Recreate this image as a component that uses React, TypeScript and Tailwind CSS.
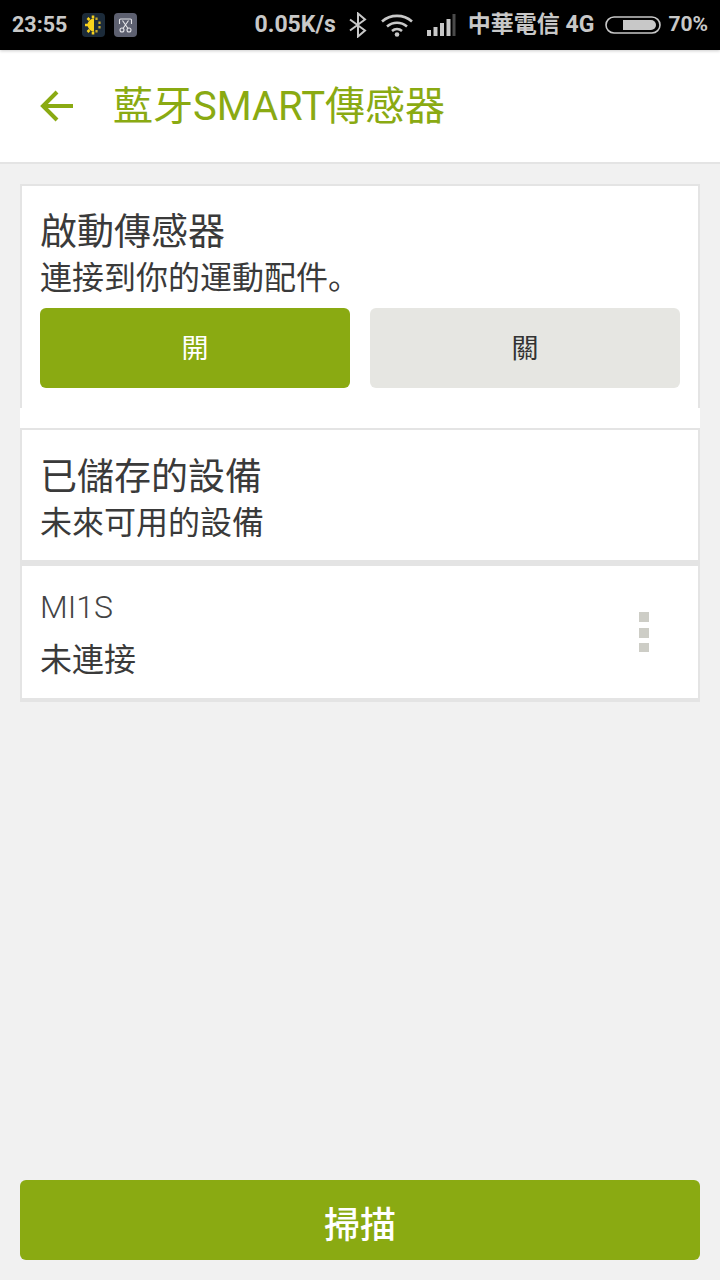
import React from "react";

const font = { fontFamily: '"Roboto","Noto Sans CJK SC","Noto Sans CJK TC",sans-serif' };

function SunIcon() {
  return (
    <svg width="23" height="24" viewBox="0 0 23 24" className="block">
      <rect width="23" height="24" rx="4" fill="#1c2b3a" />
      <path d="M12 5.500a6.500 6.500 0 0 0 0 13z" fill="#f7d21c" />
      <path d="M11 2.500v3M5.500 5l2 2M3 12h3M5.500 19l2-2M11 18.500v3" stroke="#f7d21c" strokeWidth="2.600" />
      <path d="M14.500 4.500v2.500M17.500 8.500v2.500M17.500 13v2.500M14.500 17v2.500" stroke="#c9a92a" strokeWidth="2.200" />
    </svg>
  );
}

function ClipIcon() {
  return (
    <svg width="23" height="24" viewBox="0 0 23 24" className="block">
      <rect width="23" height="24" rx="4" fill="#5d6070" />
      <path d="M5.500 11V7a1 1 0 0 1 1-1h10a1 1 0 0 1 1 1v4" fill="none" stroke="#e4e4e8" strokeWidth="1.100" />
      <path d="M8.500 7.500l5.500 8M14.500 7.500l-5.500 8" fill="none" stroke="#e4e4e8" strokeWidth="1.100" />
      <circle cx="8" cy="17" r="2" fill="none" stroke="#e4e4e8" strokeWidth="1.100" />
      <circle cx="15" cy="17" r="2" fill="none" stroke="#e4e4e8" strokeWidth="1.100" />
    </svg>
  );
}

function BluetoothIcon() {
  return (
    <svg width="20" height="26" viewBox="0 0 20 26" className="block">
      <path d="M2 7.500l15 11-7 6V1.500l7 6-15 11" fill="none" stroke="#c8c8c8" strokeWidth="2" />
    </svg>
  );
}

function WifiIcon() {
  return (
    <svg width="34" height="24" viewBox="0 0 34 24" className="block">
      <g fill="none" stroke="#c8c8c8" strokeWidth="2.600">
        <path d="M2 8.500C10.500 1 23.500 1 32 8.500" />
        <path d="M7 13.500c6-5 14-5 20 0" />
        <path d="M12 18c3-2.500 7-2.500 10 0" />
      </g>
      <circle cx="17" cy="21.500" r="2.300" fill="#c8c8c8" />
    </svg>
  );
}

function SignalIcon() {
  return (
    <svg width="30" height="24" viewBox="0 0 30 24" className="block">
      <rect x="0" y="17" width="4" height="6" fill="#c8c8c8" />
      <rect x="6.500" y="14" width="4" height="9" fill="#c8c8c8" />
      <rect x="13" y="10" width="4" height="13" fill="#c8c8c8" />
      <rect x="19.500" y="6" width="4" height="17" fill="#c8c8c8" />
      <rect x="25.500" y="1" width="3" height="22" fill="#4a4a4a" />
    </svg>
  );
}

function BatteryIcon() {
  return (
    <svg width="56" height="20" viewBox="0 0 56 20" className="block">
      <rect x="1" y="2" width="54" height="16" rx="8" fill="none" stroke="#c8c8c8" strokeWidth="1.600" />
      <path d="M18 5h28a5 5 0 0 1 0 10H18z" fill="#c8c8c8" />
    </svg>
  );
}

function StatusBar() {
  return (
    <div className="h-[50px] bg-black flex items-center justify-between pl-3 pr-3 text-[#c8c8c8] font-bold relative z-10 shadow-[0_1px_3px_rgba(0,0,0,0.2)]">
      <div className="flex items-center">
        <span className="text-[21.500px] w-[70px]">23:55</span>
        <div className="flex items-center gap-[9px]">
          <SunIcon />
          <ClipIcon />
        </div>
      </div>
      <div className="flex items-center">
        <span className="text-[23px] mr-[12px]">0.05K/s</span>
        <BluetoothIcon />
        <div className="w-[12px]" />
        <WifiIcon />
        <div className="w-[13px]" />
        <SignalIcon />
        <span className="text-[23px] ml-[11px] mr-[11px]">中華電信 4G</span>
        <BatteryIcon />
        <span className="text-[21px] ml-[7px]">70%</span>
      </div>
    </div>
  );
}

function Header() {
  return (
    <header className="h-[114px] bg-white border-b-2 border-[#e4e4e4] flex items-center">
      <svg width="36" height="36" viewBox="0 0 36 36" className="ml-[38px]">
        <path d="M35 18H5M19 4L5 18l14 14" fill="none" stroke="#8aaa12" strokeWidth="4" />
      </svg>
      <h1 className="ml-[39px] text-[40px] text-[#8aaa12] font-normal leading-none pt-[2px]">藍牙SMART傳感器</h1>
    </header>
  );
}

function SensorToggle() {
  return (
    <section className="bg-white h-[244px]">
      <div className="h-[224px] border-2 border-b-0 border-[#e4e4e4] px-[18px] pt-[25px]">
        <h2 className="text-[37px] leading-[44px] text-[#3a3a3a] font-normal">啟動傳感器</h2>
        <p className="text-[32px] leading-[40px] text-[#3a3a3a] mt-[3px]">連接到你的運動配件。</p>
        <div className="flex gap-[20px] mt-[10px]">
          <div className="w-[310px] h-[80px] rounded-[6px] bg-[#8aaa12] text-white text-[27px] font-normal pt-[2px] flex items-center justify-center">開</div>
          <div className="w-[310px] h-[80px] rounded-[6px] bg-[#e6e6e2] text-[#333] text-[27px] font-normal pt-[2px] flex items-center justify-center">關</div>
        </div>
      </div>
    </section>
  );
}

function SavedDevices() {
  return (
    <section className="bg-white h-[132px] border-2 border-b-0 border-[#e4e4e4] pl-[18px] pr-[19px] pt-[26px]">
      <h2 className="text-[37px] leading-[44px] text-[#3a3a3a] font-normal">已儲存的設備</h2>
      <p className="text-[32px] leading-[40px] text-[#3a3a3a] mt-[3px]">未來可用的設備</p>
    </section>
  );
}

function DeviceRow() {
  return (
    <section className="bg-white h-[142px] border-x-2 border-t-[6px] border-b-4 border-[#e4e4e4] pl-[18px] pr-[19px] flex justify-between">
      <div className="pt-[23px]">
        <div className="text-[32px] leading-[36px] text-[#444] font-light">MI1S</div>
        <div className="text-[32px] leading-[36px] text-[#3a3a3a] mt-[17px]">未連接</div>
      </div>
      <div className="flex flex-col mr-[30px] mt-[46px] w-[10px]">
        <div className="h-[10px] bg-[#cdcdc6]" />
        <div className="h-[10px] bg-[#cdcdc6] mt-[6px]" />
        <div className="h-[9px] bg-[#cdcdc6] mt-[5px]" />
      </div>
    </section>
  );
}

export default function App() {
  return (
    <div className="w-[720px] h-[1280px] bg-[#f1f1f1] flex flex-col overflow-hidden" style={font}>
      <StatusBar />
      <Header />
      <main className="flex-1 flex flex-col px-[20px] pt-[20px] pb-[20px]">
        <SensorToggle />
        <SavedDevices />
        <DeviceRow />
        <button className="mt-auto h-[80px] rounded-[6px] bg-[#8aaa12] text-white text-[36px] font-medium pt-[12px] flex items-center justify-center">掃描</button>
      </main>
    </div>
  );
}
